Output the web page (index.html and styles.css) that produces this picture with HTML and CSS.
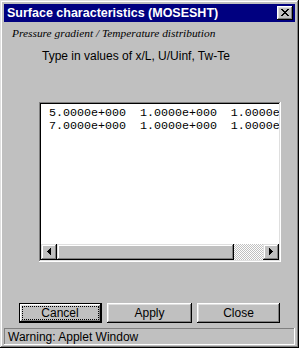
FILE: index.html
```
<!DOCTYPE html>
<html>
<head>
<meta charset="utf-8">
<link rel="stylesheet" href="styles.css">
</head>
<body>
<div class="window">
  <div class="titlebar">
    <span class="title">Surface characteristics (MOSESHT)</span>
    <div class="tbtn">
      <svg width="8" height="7" viewBox="0 0 8 7" shape-rendering="crispEdges"><path d="M0 0h2v1h-2zM6 0h2v1h-2zM1 1h2v1h-2zM5 1h2v1h-2zM2 2h4v1h-4zM3 3h2v1h-2zM2 4h4v1h-4zM1 5h2v1h-2zM5 5h2v1h-2zM0 6h2v1h-2zM6 6h2v1h-2z" fill="#000"/></svg>
    </div>
  </div>
  <div class="body">
    <div class="heading">Pressure gradient / Temperature distribution</div>
    <div class="prompt">Type in values of x/L, U/Uinf, Tw-Te</div>
    <div class="textarea">
      <div class="text">5.0000e+000  1.0000e+000  1.0000e+000
7.0000e+000  1.0000e+000  1.0000e+000</div>
      <div class="hscroll">
        <div class="sbtn">
          <svg width="4" height="7" viewBox="0 0 4 7" shape-rendering="crispEdges"><path d="M3 0h1v7h-1zM2 1h1v5h-1zM1 2h1v3h-1zM0 3h1v1h-1z" fill="#000"/></svg>
        </div>
        <div class="thumb"></div>
        <div class="trough"></div>
        <div class="sbtn">
          <svg width="4" height="7" viewBox="0 0 4 7" shape-rendering="crispEdges"><path d="M0 0h1v7h-1zM1 1h1v5h-1zM2 2h1v3h-1zM3 3h1v1h-1z" fill="#000"/></svg>
        </div>
      </div>
    </div>
    <div class="buttons">
      <div class="btn default"><span class="focus">Cancel</span></div>
      <div class="btn wide"><span class="label">Apply</span></div>
      <div class="btn"><span class="label">Close</span></div>
    </div>
    <div class="status">Warning: Applet Window</div>
  </div>
</div>
</body>
</html>
```
FILE: styles.css
```
html, body {
  margin: 0;
  padding: 0;
  background: #c0c0c0;
}
.window {
  width: 299px;
  height: 348px;
  box-sizing: border-box;
  background: #c0c0c0;
  padding: 4px 4px 3px 4px;
  box-shadow: inset -1px -1px #000, inset 1px 1px #dfdfdf, inset -2px -2px #808080, inset 2px 2px #fff;
  display: flex;
  flex-direction: column;
  font-family: "Liberation Sans", Arial, sans-serif;
  font-size: 12px;
  color: #000;
}
.titlebar {
  height: 18px;
  background: #000080;
  display: flex;
  align-items: center;
  padding: 0 2px 0 3px;
}
.title {
  flex: 1;
  color: #fff;
  font-weight: bold;
  font-size: 12.5px;
  line-height: 18px;
  white-space: nowrap;
}
.tbtn {
  width: 16px;
  height: 14px;
  box-sizing: border-box;
  background: #c0c0c0;
  box-shadow: inset -1px -1px #000, inset 1px 1px #fff, inset -2px -2px #808080, inset 2px 2px #dfdfdf;
  display: flex;
  align-items: center;
  justify-content: center;
  padding: 0 1px 1px 0;
}
.tbtn svg { display: block; }
.body {
  flex: 1;
  display: flex;
  flex-direction: column;
}
.heading {
  margin: 4px 0 0 8px;
  font-family: "Liberation Serif", "Times New Roman", serif;
  font-style: italic;
  font-size: 11.4px;
  line-height: 14px;
}
.prompt {
  margin: 9px 0 0 38px;
  line-height: 14px;
}
.textarea {
  margin: 39px 0 0 35px;
  width: 242px;
  height: 160px;
  box-sizing: border-box;
  padding: 2px;
  background: #fff;
  box-shadow: inset -1px -1px #fff, inset 1px 1px #808080, inset -2px -2px #dfdfdf, inset 2px 2px #000;
  display: flex;
  flex-direction: column;
}
.text {
  flex: 1;
  overflow: hidden;
  white-space: pre;
  font-family: "Liberation Mono", "Courier New", monospace;
  font-size: 11.67px;
  line-height: 13px;
  padding: 3px 0 0 8px;
}
.hscroll {
  height: 16px;
  display: flex;
}
.sbtn {
  width: 16px;
  height: 16px;
  box-sizing: border-box;
  background: #c0c0c0;
  box-shadow: inset -1px -1px #000, inset 1px 1px #dfdfdf, inset -2px -2px #808080, inset 2px 2px #fff;
  display: flex;
  align-items: center;
  justify-content: center;
  padding: 0 1px 1px 0;
}
.sbtn svg { display: block; }
.thumb {
  width: 177px;
  height: 16px;
  box-sizing: border-box;
  background: #c0c0c0;
  box-shadow: inset -1px -1px #000, inset 1px 1px #dfdfdf, inset -2px -2px #808080, inset 2px 2px #fff;
}
.trough {
  flex: 1;
  background: repeating-conic-gradient(#fff 0 25%, #c0c0c0 0 50%) 0 0 / 2px 2px;
}
.buttons {
  display: flex;
  gap: 5px;
  margin: 41px 0 0 15px;
}
.btn {
  width: 83px;
  height: 20px;
  box-sizing: border-box;
  background: #c0c0c0;
  box-shadow: inset -1px -1px #000, inset 1px 1px #fff, inset -2px -2px #808080, inset 2px 2px #dfdfdf;
  display: flex;
  align-items: center;
  justify-content: center;
  line-height: 14px;
}
.btn.wide { width: 85px; }
.btn.default {
  border: 1px solid #000;
  padding: 0 1px 0 0;
}
.focus {
  box-sizing: border-box;
  width: 77px;
  height: 14px;
  border: 1px dotted #000;
  display: flex;
  align-items: center;
  justify-content: center;
}
.status {
  margin-top: auto;
  height: 17px;
  box-sizing: border-box;
  padding-left: 4px;
  line-height: 18px;
  box-shadow: inset -1px -1px #fff, inset 1px 1px #808080;
}
```
